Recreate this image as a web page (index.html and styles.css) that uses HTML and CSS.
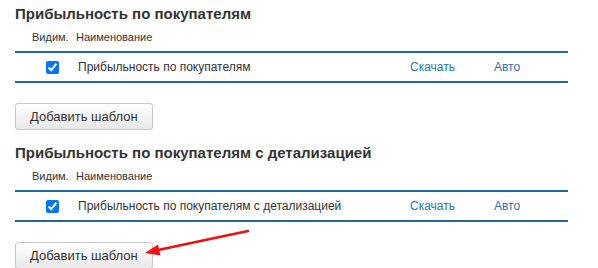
FILE: index.html
```html
<!DOCTYPE html>
<html lang="ru">
<head>
  <meta charset="UTF-8">
  <title>Шаблоны отчётов</title>
  <link rel="stylesheet" href="styles.css">
</head>
<body>
  <section class="report">
    <h2>Прибыльность по покупателям</h2>
    <table class="templates">
      <colgroup>
        <col class="col-visible">
        <col class="col-name">
        <col class="col-download">
        <col class="col-auto">
      </colgroup>
      <thead>
        <tr>
          <th class="visible">Видим.</th>
          <th>Наименование</th>
          <th></th>
          <th></th>
        </tr>
      </thead>
      <tbody>
        <tr>
          <td class="visible"><input type="checkbox" checked></td>
          <td class="name">Прибыльность по покупателям</td>
          <td><a href="#">Скачать</a></td>
          <td><a href="#">Авто</a></td>
        </tr>
      </tbody>
    </table>
    <button class="addBtn">Добавить шаблон</button>
  </section>

  <section class="report">
    <h2>Прибыльность по покупателям с детализацией</h2>
    <table class="templates">
      <colgroup>
        <col class="col-visible">
        <col class="col-name">
        <col class="col-download">
        <col class="col-auto">
      </colgroup>
      <thead>
        <tr>
          <th class="visible">Видим.</th>
          <th>Наименование</th>
          <th></th>
          <th></th>
        </tr>
      </thead>
      <tbody>
        <tr>
          <td class="visible"><input type="checkbox" checked></td>
          <td class="name">Прибыльность по покупателям с детализацией</td>
          <td><a href="#">Скачать</a></td>
          <td><a href="#">Авто</a></td>
        </tr>
      </tbody>
    </table>
    <button class="addBtn">Добавить шаблон</button>
  </section>

  <!-- red pointer drawn over the screenshot -->
  <svg class="pointer" width="598" height="268" viewBox="0 0 598 268">
    <line x1="248" y1="231" x2="158" y2="250" stroke="#ee1111" stroke-width="2.5" stroke-linecap="round"/>
    <polygon points="145,253 158,244.5 160.5,255.5" fill="#ee1111"/>
  </svg>
</body>
</html>
```

FILE: styles.css
```css
body {
  font-family: 'Liberation Sans', Arial, sans-serif;
  margin: 0;
  padding: 5px 30px 0 15px;
  color: #333;
  background-color: #fff;
}

.report h2 {
  font-size: 15px;
  line-height: 18px;
  font-weight: bold;
  margin: 0;
  color: #333;
}

.report + .report {
  margin-top: 14px;
}

.templates {
  width: 100%;
  table-layout: fixed;
  border-collapse: collapse;
}

.col-visible { width: 61px; }
.col-name { width: 334px; }
.col-download { width: 84px; }
.col-auto { width: 74px; }

.templates th {
  font-size: 11px;
  line-height: 14px;
  font-weight: normal;
  text-align: left;
  padding: 7px 0 7px 0;
  border-bottom: 2px solid #22689b;
}

.templates th.visible {
  padding-left: 17px;
}

.templates td {
  font-size: 12px;
  height: 28px;
  padding: 0;
  vertical-align: middle;
  border-bottom: 2px solid #22689b;
}

.templates td.visible {
  padding-left: 31px;
}

.templates td.name {
  padding-left: 2px;
}

.templates input {
  margin: 0;
  width: 13px;
  height: 13px;
  display: block;
}

.templates a {
  color: #2f72a8;
  text-decoration: none;
}

.addBtn {
  display: block;
  margin-top: 20px;
  height: 27px;
  padding: 0 14px;
  font-family: 'Liberation Sans', Arial, sans-serif;
  font-size: 13px;
  color: #333;
  background: linear-gradient(#ffffff, #e8e8e8);
  border: 1px solid #c8c8c8;
  border-radius: 3px;
}

.pointer {
  position: absolute;
  top: 0;
  left: 0;
  pointer-events: none;
}
```
